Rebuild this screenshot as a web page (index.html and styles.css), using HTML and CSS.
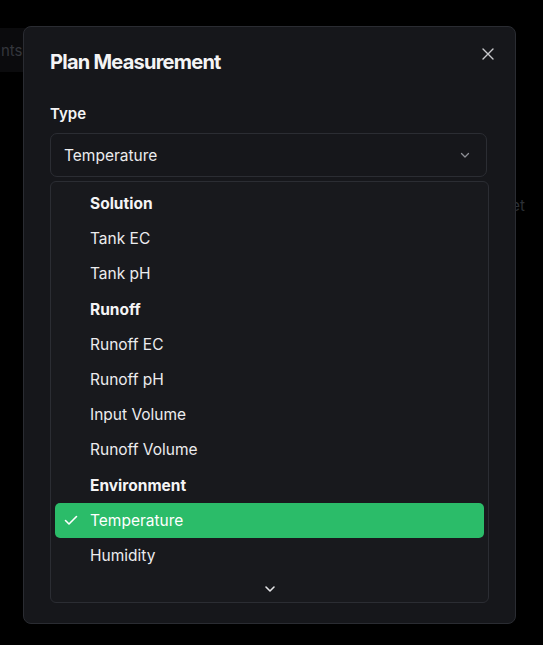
FILE: index.html
```
<!DOCTYPE html>
<html lang="en">
<head>
  <meta charset="UTF-8" />
  <meta name="viewport" content="width=device-width, initial-scale=1.0"/>
  <title>Plan Measurement</title>
  <link rel="stylesheet" href="styles.css">
</head>
<body>

<div class="page">
  <div class="page-tabs"><span class="tab">nts</span></div>
  <div class="page-row"><span class="ghost">Set</span></div>
</div>

<div class="overlay">
  <div class="dialog">
    <button class="close" aria-label="Close">
      <svg width="14" height="14" viewBox="0 0 14 14" fill="none" stroke="currentColor" stroke-width="1.4" stroke-linecap="round">
        <path d="M2 2 L12 12 M12 2 L2 12"/>
      </svg>
    </button>
    <h2 class="title">Plan Measurement</h2>

    <label class="label">Type</label>
    <div class="select">
      <span>Temperature</span>
      <svg width="12" height="12" viewBox="0 0 12 12" fill="none" stroke="currentColor" stroke-width="1.3" stroke-linecap="round" stroke-linejoin="round">
        <path d="M2.5 4.5 L6 8 L9.5 4.5"/>
      </svg>
    </div>

    <div class="menu">
      <div class="group">Solution</div>
      <div class="item">Tank EC</div>
      <div class="item">Tank pH</div>
      <div class="group">Runoff</div>
      <div class="item">Runoff EC</div>
      <div class="item">Runoff pH</div>
      <div class="item">Input Volume</div>
      <div class="item">Runoff Volume</div>
      <div class="group">Environment</div>
      <div class="item selected">
        <svg class="check" width="16" height="16" viewBox="0 0 16 16" fill="none" stroke="currentColor" stroke-width="1.6" stroke-linecap="round" stroke-linejoin="round">
          <path d="M2.5 8.5 L6 12 L13.5 4.5"/>
        </svg>
        Temperature
      </div>
      <div class="item">Humidity</div>
      <div class="scroll-down">
        <svg width="14" height="14" viewBox="0 0 14 14" fill="none" stroke="currentColor" stroke-width="1.6" stroke-linecap="round" stroke-linejoin="round">
          <path d="M3 5 L7 9 L11 5"/>
        </svg>
      </div>
    </div>
  </div>
</div>

</body>
</html>
```

FILE: styles.css
```
* {
  box-sizing: border-box;
}
body {
  margin: 0;
  font-family: Inter, "Noto Sans", sans-serif;
  background: #000;
  color: #f4f4f5;
  height: 645px;
  overflow: hidden;
}
.page {
  height: 100%;
  background: #000;
}
.page-tabs {
  height: 44px;
  margin-top: 28px;
  width: 40px;
  background: #0b0b0d;
  display: flex;
  align-items: center;
}
.tab {
  font-size: 15px;
  color: #34363c;
  margin-left: 1px;
}
.page-row {
  display: flex;
  justify-content: flex-end;
  padding: 124px 18px 0 0;
}
.ghost {
  font-size: 15px;
  color: #2c3036;
}
.overlay {
  position: fixed;
  inset: 0;
}
.dialog {
  position: absolute;
  left: 23px;
  top: 26px;
  width: 493px;
  height: 598px;
  background: #16171b;
  border: 1px solid #2a2c32;
  border-radius: 8px;
  padding: 18px 26px 0 26px;
}
.close {
  position: absolute;
  right: 20px;
  top: 20px;
  background: none;
  border: none;
  padding: 0;
  color: #c8c9cc;
  cursor: pointer;
  display: flex;
}
.title {
  margin: 0;
  font-size: 20px;
  line-height: 34px;
  font-weight: 700;
  letter-spacing: -0.75px;
}
.label {
  display: block;
  margin-top: 25px;
  font-size: 15px;
  font-weight: 600;
  line-height: 20px;
}
.select {
  margin-top: 9px;
  height: 44px;
  width: 437px;
  border: 1px solid #2b2d33;
  border-radius: 7px;
  display: flex;
  align-items: center;
  justify-content: space-between;
  padding: 0 15px 0 13px;
  font-size: 15.5px;
  color: #ececee;
}
.select svg {
  color: #8d8f95;
}
.menu {
  margin-top: 4px;
  width: 439px;
  height: 422px;
  background: #18191d;
  border: 1px solid #2b2d33;
  border-radius: 6px;
  padding: 4px;
}
.group,
.item {
  height: 35.2px;
  display: flex;
  align-items: center;
  padding-left: 35px;
  font-size: 15.5px;
}
.group {
  font-weight: 700;
}
.item {
  color: #ececee;
}
.item.selected {
  background: #2bbc69;
  color: #fff;
  border-radius: 5px;
  position: relative;
}
.check {
  position: absolute;
  left: 8px;
  top: 9px;
}
.scroll-down {
  height: 32px;
  display: flex;
  align-items: center;
  justify-content: center;
  color: #e4e4e7;
}
```
